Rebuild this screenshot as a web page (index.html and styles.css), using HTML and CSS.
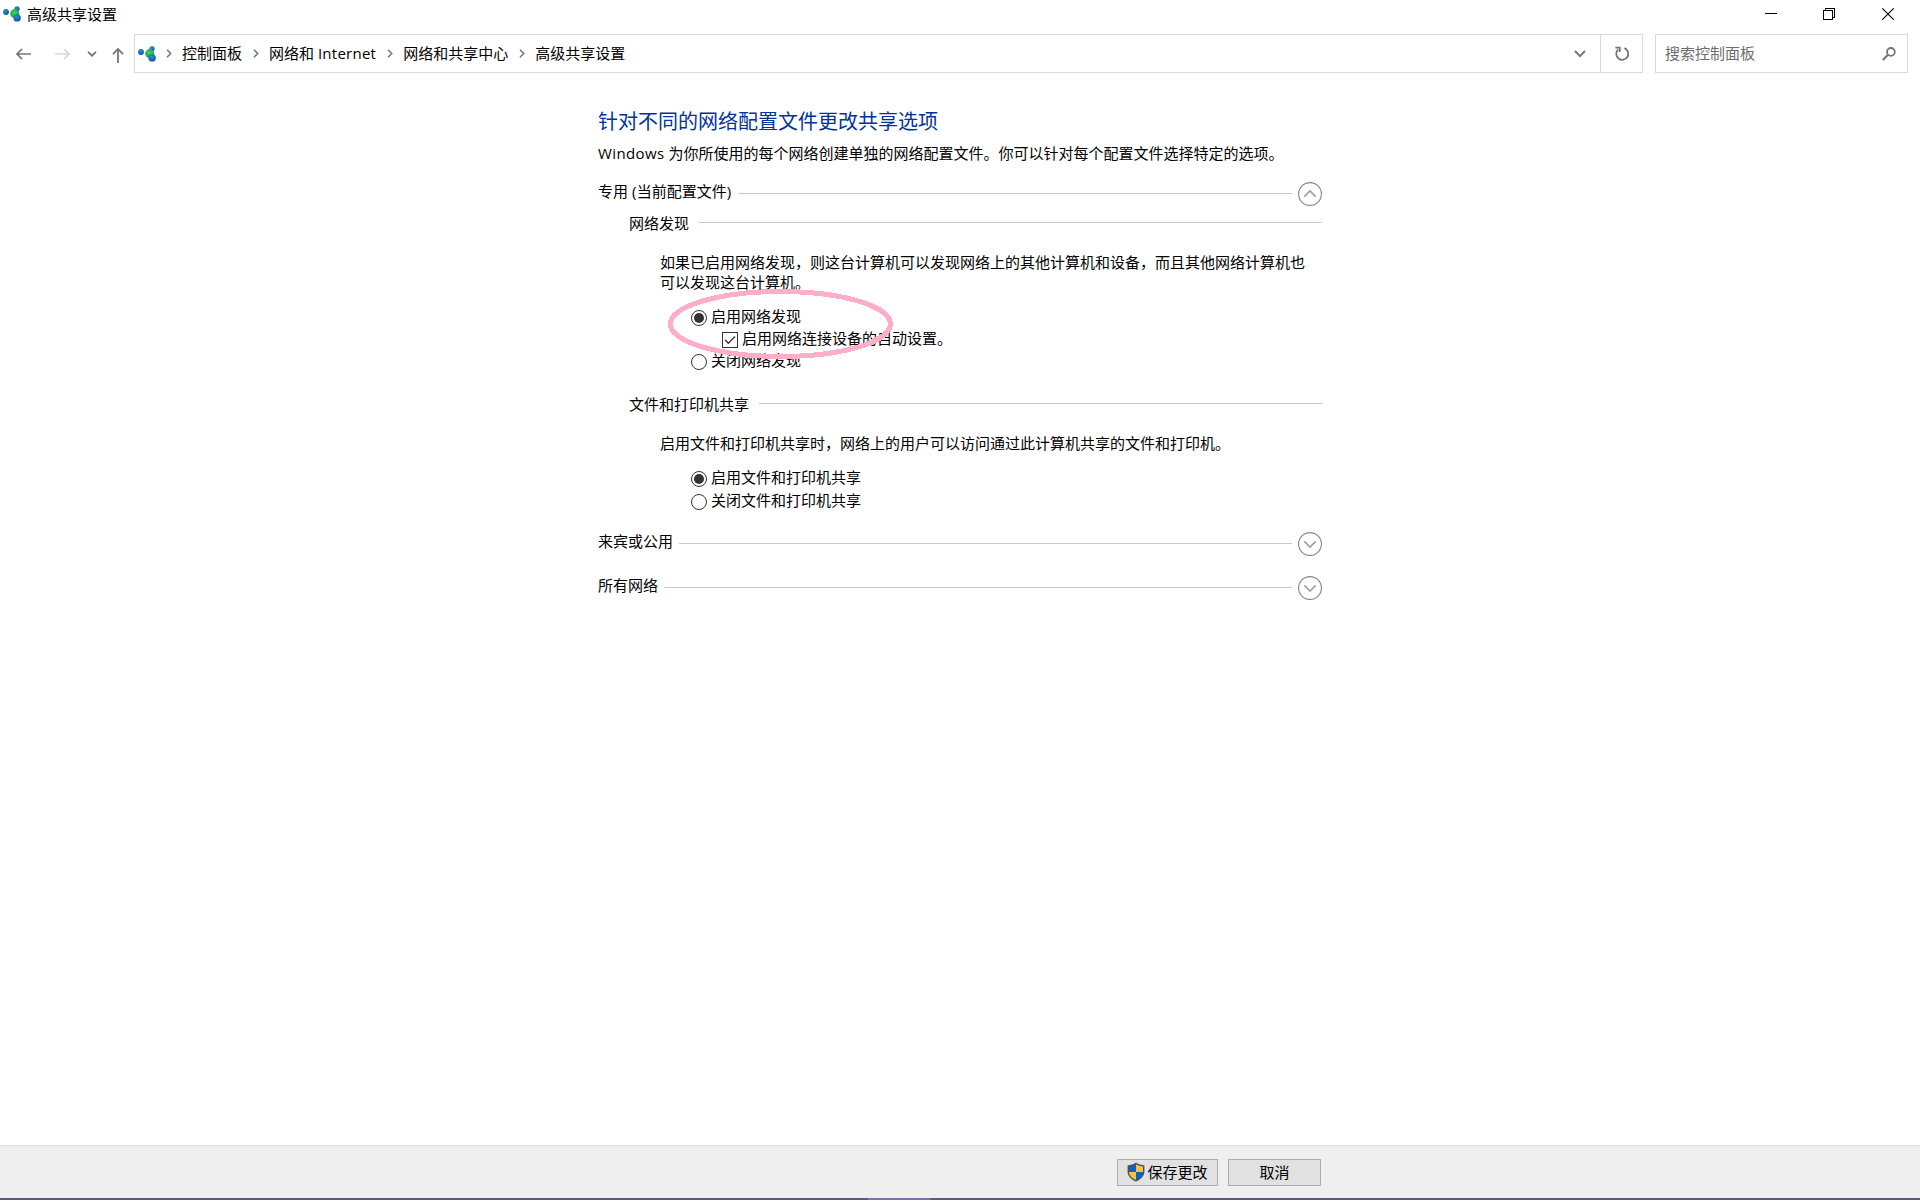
FILE: index.html
```
<!DOCTYPE html>
<html lang="zh-CN">

<head>
    <meta charset="UTF-8">
    <meta name="viewport" content="width=device-width, initial-scale=1.0">
    <title>高级共享设置</title>
    <link rel="stylesheet" href="styles.css">
</head>

<body>
    <svg class="defs" width="0" height="0">
        <defs>
            <radialGradient id="blue" cx="40%" cy="35%" r="70%">
                <stop offset="0" stop-color="#2f8fd8" />
                <stop offset="1" stop-color="#0b4f9c" />
            </radialGradient>
            <radialGradient id="green" cx="45%" cy="40%" r="65%">
                <stop offset="0" stop-color="#3fd65c" />
                <stop offset="1" stop-color="#159a3c" />
            </radialGradient>
            <symbol id="share" viewBox="0 0 18 16">
                <circle cx="3" cy="6" r="2.9" fill="url(#blue)" />
                <circle cx="14" cy="2.8" r="2.6" fill="url(#blue)" />
                <circle cx="11.7" cy="7.6" r="4.5" fill="url(#green)" />
                <circle cx="14.1" cy="11.9" r="3.7" fill="url(#blue)" />
            </symbol>
            <symbol id="sep" viewBox="0 0 6 9">
                <path d="M1 .8L4.7 4.5L1 8.2" fill="none" stroke="#7a7a7a" stroke-width="1.6" />
            </symbol>
            <symbol id="down" viewBox="0 0 24 24">
                <circle cx="12" cy="12" r="11.4" fill="none" stroke="#858585" stroke-width="1.1" />
                <path d="M6.3 9.4L12 15L17.7 9.4" fill="none" stroke="#a0a0a0" stroke-width="1.7" />
            </symbol>
        </defs>
    </svg>

    <!-- 标题栏 -->
    <div class="titlebar">
        <svg class="logo" width="18" height="16"><use href="#share" /></svg>
        <span class="title">高级共享设置</span>
        <div class="controls">
            <svg class="min" width="12" height="12" viewBox="0 0 12 12" shape-rendering="crispEdges"><path d="M0 5.5H12" stroke="#000" /></svg>
            <svg width="12" height="12" viewBox="0 0 12 12" shape-rendering="crispEdges"><path d="M.5 2.5H9.5V11.5H.5ZM2.5 2.5V.5H11.5V9.5H9.5" fill="none" stroke="#000" /></svg>
            <svg width="12" height="12" viewBox="0 0 12 12"><path d="M.3 .3L11.7 11.7M11.7 .3L.3 11.7" stroke="#000" stroke-width="1.1" /></svg>
        </div>
    </div>

    <!-- 导航 -->
    <div class="nav">
        <div class="arrows">
            <svg width="15" height="12" viewBox="0 0 15 12"><path d="M15 6H1M6 1L1 6L6 11" fill="none" stroke="#757575" stroke-width="1.7" /></svg>
            <svg class="forward" width="15" height="12" viewBox="0 0 15 12"><path d="M0 6H14M9 1L14 6L9 11" fill="none" stroke="#d9d9d9" stroke-width="1.7" /></svg>
            <svg class="recent" width="10" height="6" viewBox="0 0 10 6"><path d="M1 .8L5 4.7L9 .8" fill="none" stroke="#757575" stroke-width="1.8" /></svg>
            <svg class="up" width="12" height="15" viewBox="0 0 12 15"><path d="M6 15V1M1 6.2L6 1L11 6.2" fill="none" stroke="#757575" stroke-width="1.8" /></svg>
        </div>
        <div class="address">
            <svg class="logo" width="18" height="16"><use href="#share" /></svg>
            <svg class="sep" width="6" height="9"><use href="#sep" /></svg>
            <span>控制面板</span>
            <svg class="sep" width="6" height="9"><use href="#sep" /></svg>
            <span>网络和 <b>Internet</b></span>
            <svg class="sep" width="6" height="9"><use href="#sep" /></svg>
            <span>网络和共享中心</span>
            <svg class="sep" width="6" height="9"><use href="#sep" /></svg>
            <span>高级共享设置</span>
            <div class="drop">
                <svg width="12" height="8" viewBox="0 0 12 8"><path d="M1 1L6 6.2L11 1" fill="none" stroke="#757575" stroke-width="1.9" /></svg>
            </div>
            <div class="refresh">
                <svg width="14" height="15" viewBox="0 0 14 15"><path d="M9.4 2.2A6 6 0 1 1 3.2 3.4" fill="none" stroke="#757575" stroke-width="1.8" /><path d="M.4 1.6H4.8V6" fill="none" stroke="#757575" stroke-width="1.7" /></svg>
            </div>
        </div>
        <div class="search">
            <span>搜索控制面板</span>
            <svg width="14" height="14" viewBox="0 0 14 14"><circle cx="8.9" cy="4.9" r="3.9" fill="none" stroke="#757575" stroke-width="1.8" /><path d="M6 7.8L.8 13" stroke="#757575" stroke-width="2.2" /></svg>
        </div>
    </div>

    <!-- 内容 -->
    <div class="main">
        <h1>针对不同的网络配置文件更改共享选项</h1>
        <p class="intro"><b>Windows</b> 为你所使用的每个网络创建单独的网络配置文件。你可以针对每个配置文件选择特定的选项。</p>

        <div class="section">
            <span>专用 <b>(</b>当前配置文件<b>)</b></span>
            <i class="line"></i>
            <svg class="open" width="24" height="24"><use href="#down" /></svg>
        </div>

        <div class="group">
            <div class="sub"><span>网络发现</span><i class="line"></i></div>
            <p>如果已启用网络发现，则这台计算机可以发现网络上的其他计算机和设备，而且其他网络计算机也<br>可以发现这台计算机。</p>
            <div class="options">
                <label><i class="radio checked"></i>启用网络发现</label>
                <label class="child">
                    <i class="check"><svg width="14" height="14" viewBox="0 0 14 14"><path d="M2 6.8L5.3 10.2L12 3.5" fill="none" stroke="#333" stroke-width="1.3" /></svg></i>启用网络连接设备的自动设置。
                </label>
                <label><i class="radio"></i>关闭网络发现</label>
                <svg class="mark" width="228" height="74" viewBox="0 0 228 74" shape-rendering="crispEdges"><ellipse cx="113.4" cy="37" rx="110" ry="32.5" fill="none" stroke="#ffaec9" stroke-width="5" /></svg>
            </div>
        </div>

        <div class="group share">
            <div class="sub"><span>文件和打印机共享</span><i class="line"></i></div>
            <p>启用文件和打印机共享时，网络上的用户可以访问通过此计算机共享的文件和打印机。</p>
            <div class="options">
                <label><i class="radio checked"></i>启用文件和打印机共享</label>
                <label><i class="radio"></i>关闭文件和打印机共享</label>
            </div>
        </div>

        <div class="section">
            <span>来宾或公用</span>
            <i class="line"></i>
            <svg width="24" height="24"><use href="#down" /></svg>
        </div>
        <div class="section">
            <span>所有网络</span>
            <i class="line"></i>
            <svg width="24" height="24"><use href="#down" /></svg>
        </div>
    </div>

    <!-- 底部按钮 -->
    <div class="footer">
        <button class="save">
            <svg width="18" height="20" viewBox="0 0 18 20">
                <path d="M9 .5C6.5 2.3 3.5 3.1 .6 3.2V9.5C.6 14 4 17.4 9 19.5C14 17.4 17.4 14 17.4 9.5V3.2C14.5 3.1 11.5 2.3 9 .5Z" fill="#4d5358" />
                <path d="M9 2.2C7 3.5 4.5 4.3 2 4.5V10H9Z" fill="#0a63c4" />
                <path d="M9 2.2C11 3.5 13.5 4.3 16 4.5V10H9Z" fill="#ffc23d" />
                <path d="M2 10H9V18C5 16.2 2.1 13.5 2 10Z" fill="#ffc23d" />
                <path d="M16 10H9V18C13 16.2 15.9 13.5 16 10Z" fill="#0a63c4" />
            </svg>保存更改
        </button>
        <button class="cancel">取消</button>
    </div>
    <div class="taskbar"><i></i></div>
</body>

</html>
```
FILE: styles.css
```
* {
    margin: 0;
    padding: 0;
    box-sizing: border-box;
}

html,
body {
    width: 100%;
    height: 100%;
}

body {
    display: flex;
    flex-direction: column;
    overflow: hidden;
    background: #fff;
    color: #000;
    font: 15px/20px "Open Sans", "Noto Sans CJK SC", sans-serif;
    white-space: nowrap;
}

svg {
    display: block;
    flex: none;
}

/*英文字距*/
b {
    font-weight: normal;
    letter-spacing: .25px;
}

.defs {
    position: absolute;
}

/*标题栏*/
.titlebar {
    display: flex;
    align-items: center;
    height: 28px;
    padding: 0 26px 0 3px;
}

.title {
    margin-left: 6px;
}

.controls {
    display: flex;
    gap: 47px;
    margin-left: auto;
}

.min {
    margin-right: -1px;
}

/*导航*/
.nav {
    display: flex;
    height: 39px;
    margin-top: 6px;
    padding-right: 12px;
}

.arrows {
    display: flex;
    align-items: center;
    width: 134px;
    padding-left: 16px;
}

.forward {
    margin-left: 24px;
}

.recent {
    margin-left: 17px;
}

.up {
    margin: 3px 0 0 15px;
}

.address {
    display: flex;
    align-items: center;
    width: 1509px;
    border: 1px solid #d9d9d9;
    padding-left: 3px;
}

.address span,
.search span {
    margin-top: -2px;
}

.address .sep {
    margin: 0 10px 0 11px;
}

.address .logo + .sep {
    margin-left: 10px;
}

.drop {
    margin-left: auto;
    padding-right: 14px;
}

.refresh {
    display: flex;
    align-items: center;
    justify-content: center;
    width: 42px;
    height: 100%;
    border-left: 1px solid #d9d9d9;
}

.search {
    display: flex;
    align-items: center;
    justify-content: space-between;
    flex: 1;
    margin-left: 12px;
    padding: 0 11px 0 9px;
    border: 1px solid #d9d9d9;
    color: #6d6d6d;
}

/*内容*/
.main {
    flex: 1;
    width: 724px;
    margin-left: 598px;
    padding-top: 34px;
}

h1 {
    color: #003399;
    font-size: 20px;
    font-weight: normal;
    line-height: 30px;
}

.intro {
    margin-top: 6px;
}

.intro b,
.section b {
    letter-spacing: .4px;
}

.section {
    display: flex;
    align-items: center;
    height: 24px;
    margin-top: 20px;
}

.intro + .section {
    margin-top: 19px;
}

.section span {
    margin-top: -6px;
}

.line {
    flex: 1;
    height: 1px;
    margin: 0 6px;
    background: #c8c8c8;
}

.section .line {
    margin-top: -1px;
}

.open {
    transform: rotate(180deg);
}

.group {
    margin-top: 7px;
    padding-left: 31px;
}

.share {
    margin: 23px 0 21px;
}

.sub {
    display: flex;
    align-items: center;
    height: 20px;
}

.sub .line {
    margin: -2px 0 0 10px;
}

.group p {
    margin: 19px 0 13px 31px;
}

.options {
    position: relative;
    padding-left: 62px;
}

label {
    display: flex;
    align-items: center;
    gap: 4px;
    height: 22px;
}

.share label + label {
    margin-top: 1px;
}

.child {
    padding-left: 31px;
}

.radio,
.check {
    display: flex;
    width: 16px;
    height: 16px;
    margin-top: 4px;
    border: 1px solid #333;
}

.radio {
    border-radius: 50%;
}

.checked::after {
    content: "";
    width: 10px;
    height: 10px;
    margin: 2px;
    border-radius: 50%;
    background: #333;
}

/*粉色圈*/
.mark {
    position: absolute;
    left: 38px;
    top: -18px;
}

/*底部*/
.footer {
    display: flex;
    gap: 10px;
    height: 53px;
    padding: 13px 0 0 1117px;
    border-top: 1px solid #dfdfdf;
    background: #efefef;
}

button {
    display: flex;
    align-items: center;
    justify-content: center;
    height: 27px;
    padding-bottom: 2px;
    border: 1px solid #adadad;
    background: #e1e1e1;
    color: #000;
    font: inherit;
}

.save {
    gap: 2px;
    width: 101px;
}

.save svg {
    margin-top: 1px;
}

.cancel {
    width: 93px;
}

.taskbar {
    height: 2px;
    background: #5d5c76;
}

.taskbar i {
    display: block;
    width: 62px;
    height: 2px;
    margin-left: 868px;
    background: #7673a8;
}
```
